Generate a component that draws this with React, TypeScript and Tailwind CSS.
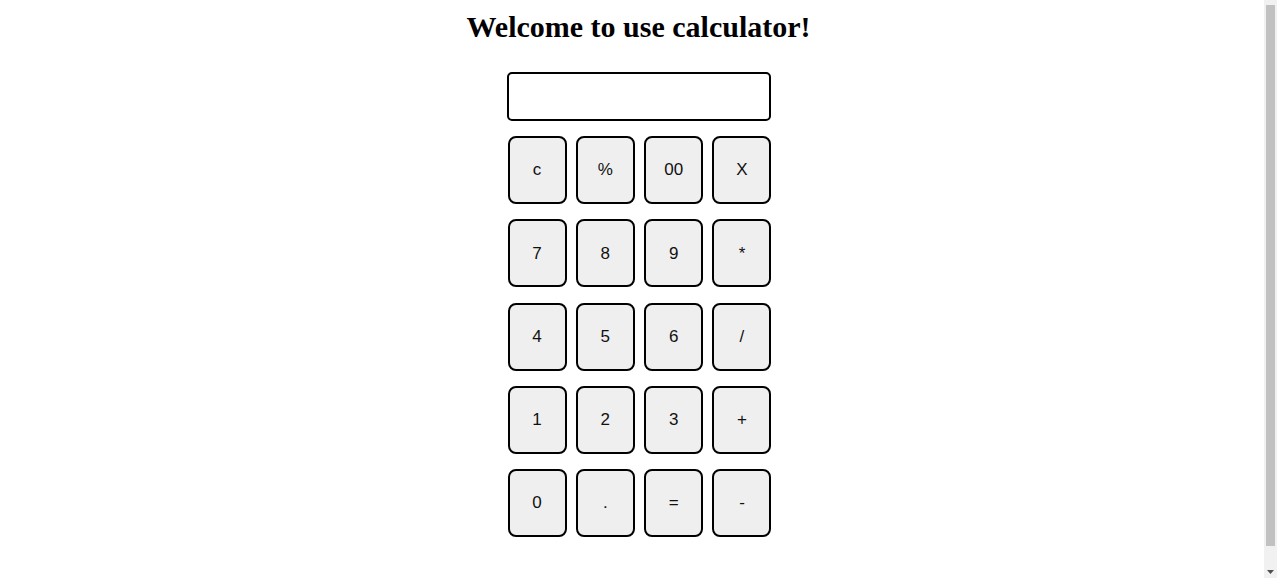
const keys = [
  ["c", "%", "00", "X"],
  ["7", "8", "9", "*"],
  ["4", "5", "6", "/"],
  ["1", "2", "3", "+"],
  ["0", ".", "=", "-"],
];

function FakeScrollbar() {
  return (
    <div className="fixed right-0 top-0 flex h-full w-[13px] flex-col bg-[#f1f1f1]">
      <div className="h-[5px]" />
      <div className="mx-[2px] h-[541px] bg-[#c1c1c1]" />
      <div className="flex flex-1 items-end justify-center pb-[4px]">
        <svg width="7" height="4" viewBox="0 0 7 4">
          <path d="M0 0h7L3.5 4z" fill="#505050" />
        </svg>
      </div>
    </div>
  );
}

export default function App() {
  return (
    <div className="min-h-[578px] bg-white pt-[10px] text-black">
      <h1 className="text-center font-['Liberation_Serif',serif] text-[30px] font-bold leading-[33px]">
        Welcome to use calculator!
      </h1>
      <div className="mx-auto mt-[29px] w-[264px] font-['Liberation_Sans',Arial,sans-serif]">
        <input
          type="text"
          className="block h-[49px] w-[264px] rounded-[5px] border-2 border-black bg-white px-2 text-[16px] outline-none"
        />
        <div className="mt-[15px] grid grid-cols-[repeat(4,59px)] gap-x-[9.33px] gap-y-[15.25px] pl-[1px]">
          {keys.flat().map((k, i) => (
            <button
              key={i}
              className="h-[68px] w-[59px] rounded-[8px] border-2 border-black bg-[#efefef] text-[17px] text-[#111]"
            >
              {k}
            </button>
          ))}
        </div>
      </div>
      <FakeScrollbar />
    </div>
  );
}
